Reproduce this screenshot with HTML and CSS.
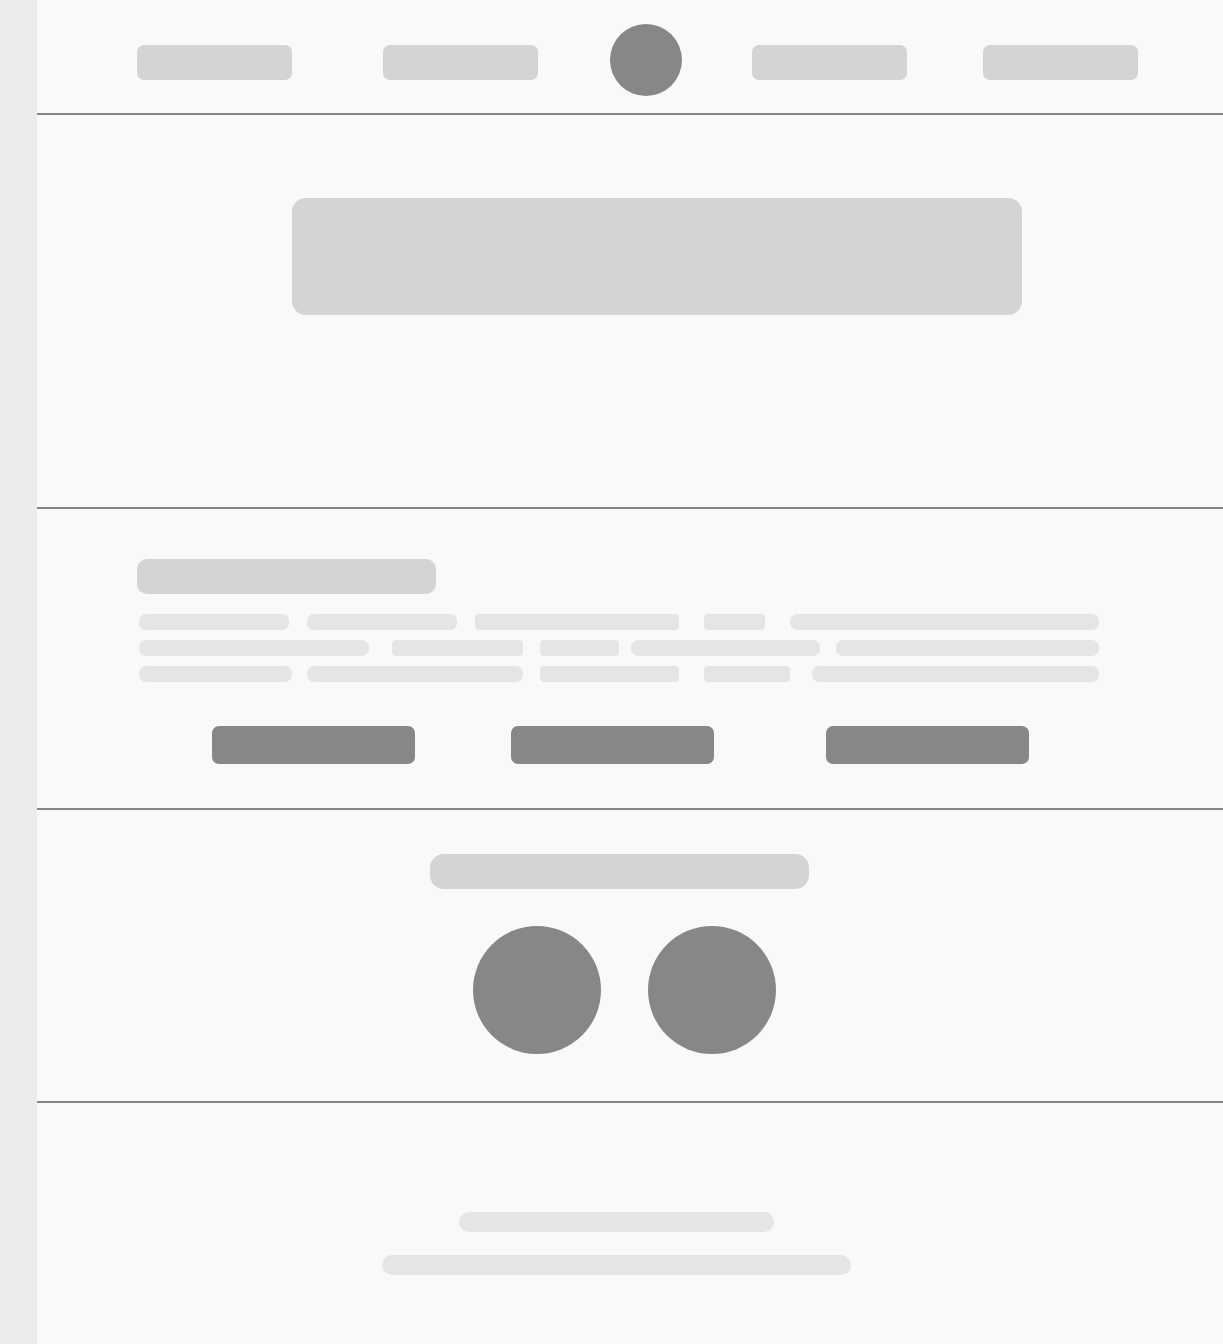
FILE: index.html
```html
<!DOCTYPE html>
<html lang="en">
<head>
<meta charset="utf-8">
<title>Wireframe</title>
<link rel="stylesheet" href="styles.css">
</head>
<body>
<div class="shell">
  <aside class="rail"></aside>
  <main class="main">
    <header class="topbar">
      <span class="nav-pill"></span>
      <span class="nav-pill nav-2"></span>
      <span class="logo"></span>
      <span class="nav-pill nav-4"></span>
      <span class="nav-pill nav-5"></span>
    </header>

    <section class="hero">
      <div class="hero-block"></div>
    </section>

    <section class="intro">
      <div class="intro-title"></div>
      <div class="lines">
        <div class="line-row">
          <span class="bar w150 g18"></span>
          <span class="bar w150 g18"></span>
          <span class="bar w204 g25 r-sm"></span>
          <span class="bar w61 g25 r-sm"></span>
          <span class="bar w309"></span>
        </div>
        <div class="line-row">
          <span class="bar w230 g23"></span>
          <span class="bar w131 g17 r-sm"></span>
          <span class="bar w79 g12 r-sm"></span>
          <span class="bar w189 g16"></span>
          <span class="bar w263"></span>
        </div>
        <div class="line-row">
          <span class="bar w153 g15"></span>
          <span class="bar w216 g17"></span>
          <span class="bar w139 g25 r-sm"></span>
          <span class="bar w86 g22 r-sm"></span>
          <span class="bar w287"></span>
        </div>
      </div>
      <div class="actions">
        <span class="btn"></span>
        <span class="btn btn-2"></span>
        <span class="btn btn-3"></span>
      </div>
    </section>

    <section class="social">
      <div class="social-title"></div>
      <div class="avatars">
        <span class="avatar"></span>
        <span class="avatar"></span>
      </div>
    </section>

    <footer class="footer">
      <span class="foot-line foot-short"></span>
      <span class="foot-line foot-long"></span>
    </footer>
  </main>
</div>
</body>
</html>
```

FILE: styles.css
```css
* { box-sizing: border-box; }

html, body {
  margin: 0;
  padding: 0;
  background: #f9f9f9;
  font-family: "Liberation Sans", Arial, sans-serif;
}

.shell {
  display: flex;
  min-height: 1344px;
}

.rail {
  flex: 0 0 37px;
  background: #ecebe9;
}

.main {
  flex: 1;
  background: #f9f9f9;
  display: flex;
  flex-direction: column;
}

/* header */
.topbar {
  height: 115px;
  border-bottom: 2px solid #858585;
  display: flex;
  align-items: flex-start;
  padding: 24px 0 0 100px;
}

.nav-pill {
  width: 155px;
  height: 35px;
  margin-top: 21px;
  background: #d4d4d4;
  border-radius: 7px;
}

.nav-2 { margin-left: 91px; }
.nav-4 { margin-left: 70px; }
.nav-5 { margin-left: 76px; }

.logo {
  width: 72px;
  height: 72px;
  margin-left: 72px;
  border-radius: 50%;
  background: #878787;
}

/* hero */
.hero {
  height: 394px;
  border-bottom: 2px solid #858585;
  padding: 83px 0 0 255px;
}

.hero-block {
  width: 730px;
  height: 117px;
  background: #d4d4d4;
  border-radius: 14px;
}

/* intro */
.intro {
  height: 301px;
  border-bottom: 2px solid #858585;
  padding: 50px 0 0 100px;
}

.intro-title {
  width: 299px;
  height: 35px;
  background: #d4d4d4;
  border-radius: 10px;
}

.lines {
  margin: 20px 0 0 2px;
  display: flex;
  flex-direction: column;
  gap: 10px;
}

.line-row {
  display: flex;
}

.bar {
  height: 16px;
  background: #e5e5e5;
  border-radius: 7px;
}

.r-sm { border-radius: 4px; }

.w61 { width: 61px; }
.w79 { width: 79px; }
.w86 { width: 86px; }
.w131 { width: 131px; }
.w139 { width: 139px; }
.w150 { width: 150px; }
.w153 { width: 153px; }
.w189 { width: 189px; }
.w204 { width: 204px; }
.w216 { width: 216px; }
.w230 { width: 230px; }
.w263 { width: 263px; }
.w287 { width: 287px; }
.w309 { width: 309px; }

.g12 { margin-right: 12px; }
.g15 { margin-right: 15px; }
.g16 { margin-right: 16px; }
.g17 { margin-right: 17px; }
.g18 { margin-right: 18px; }
.g22 { margin-right: 22px; }
.g23 { margin-right: 23px; }
.g25 { margin-right: 25px; }

.actions {
  display: flex;
  margin: 44px 0 0 75px;
}

.btn {
  width: 203px;
  height: 38px;
  background: #878787;
  border-radius: 7px;
}

.btn-2 { margin-left: 96px; }
.btn-3 { margin-left: 112px; }

/* social */
.social {
  height: 293px;
  border-bottom: 2px solid #858585;
  padding: 44px 0 0 0;
}

.social-title {
  width: 379px;
  height: 35px;
  margin-left: 393px;
  background: #d4d4d4;
  border-radius: 14px;
}

.avatars {
  display: flex;
  gap: 47px;
  margin: 37px 0 0 436px;
}

.avatar {
  width: 128px;
  height: 128px;
  border-radius: 50%;
  background: #878787;
}

/* footer */
.footer {
  flex: 1;
  display: flex;
  flex-direction: column;
  padding-top: 109px;
  gap: 23px;
}

.foot-line {
  height: 20px;
  background: #e5e5e5;
  border-radius: 10px;
}

.foot-short {
  width: 315px;
  margin-left: 422px;
}

.foot-long {
  width: 469px;
  margin-left: 345px;
}
```
